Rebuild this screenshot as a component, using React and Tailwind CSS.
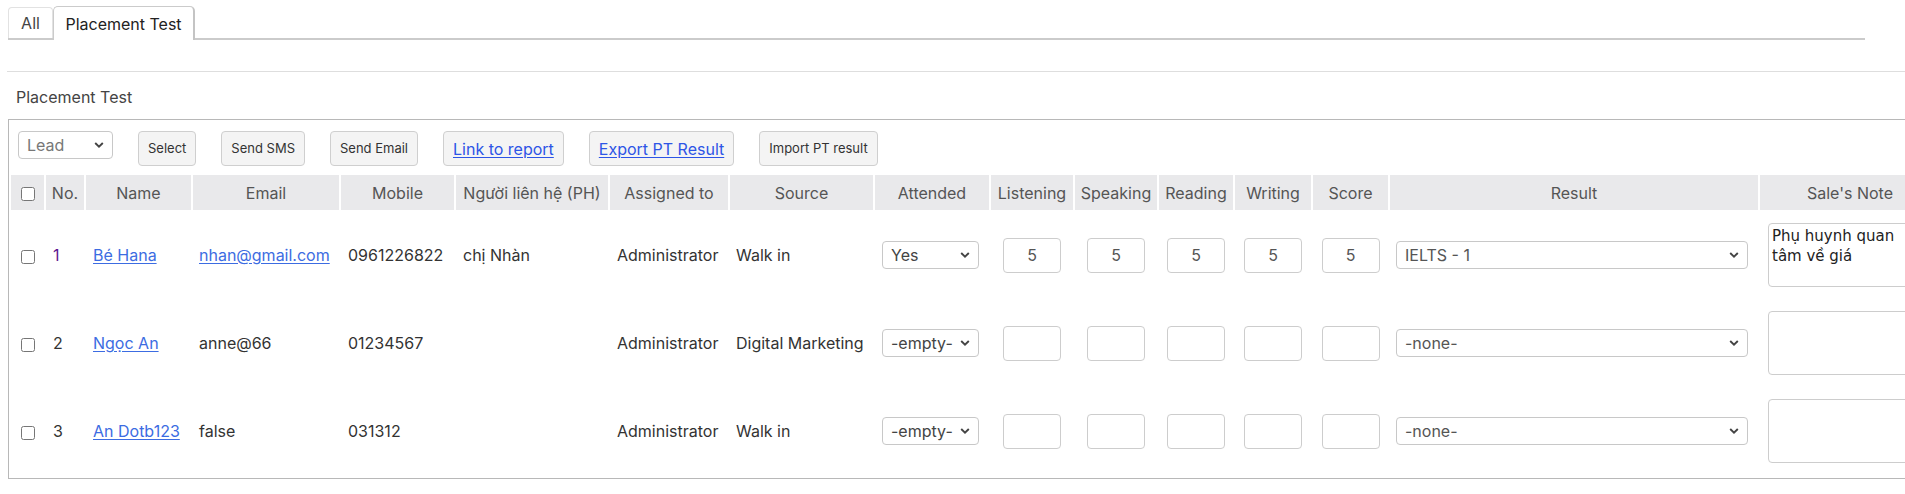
import React from "react";

const columns = [
  { key: "cb", label: "", width: 33 },
  { key: "no", label: "No.", width: 38 },
  { key: "name", label: "Name", width: 105 },
  { key: "email", label: "Email", width: 146 },
  { key: "mobile", label: "Mobile", width: 113 },
  { key: "contact", label: "Người liên hệ (PH)", width: 152 },
  { key: "assigned", label: "Assigned to", width: 118 },
  { key: "source", label: "Source", width: 143 },
  { key: "attended", label: "Attended", width: 114 },
  { key: "listening", label: "Listening", width: 82 },
  { key: "speaking", label: "Speaking", width: 82 },
  { key: "reading", label: "Reading", width: 74 },
  { key: "writing", label: "Writing", width: 76 },
  { key: "score", label: "Score", width: 75 },
  { key: "result", label: "Result", width: 368 },
  { key: "note", label: "Sale's Note", width: 180 },
];

const students = [
  {
    no: 1,
    name: "Bé Hana",
    email: "nhan@gmail.com",
    emailIsLink: true,
    mobile: "0961226822",
    contact: "chị Nhàn",
    assigned: "Administrator",
    source: "Walk in",
    attended: "Yes",
    scores: ["5", "5", "5", "5", "5"],
    result: "IELTS - 1",
    note: "Phụ huynh quan tâm về giá",
  },
  {
    no: 2,
    name: "Ngọc An",
    email: "anne@66",
    emailIsLink: false,
    mobile: "01234567",
    contact: "",
    assigned: "Administrator",
    source: "Digital Marketing",
    attended: "-empty-",
    scores: ["", "", "", "", ""],
    result: "-none-",
    note: "",
  },
  {
    no: 3,
    name: "An Dotb123",
    email: "false",
    emailIsLink: false,
    mobile: "031312",
    contact: "",
    assigned: "Administrator",
    source: "Walk in",
    attended: "-empty-",
    scores: ["", "", "", "", ""],
    result: "-none-",
    note: "",
  },
];

const Chevron = () => (
  <svg
    className="pointer-events-none absolute right-[9px] top-1/2 -translate-y-1/2"
    width="10"
    height="7"
    viewBox="0 0 10 7"
    fill="none"
  >
    <path d="M1.2 1.5 5 5.2 8.8 1.5" stroke="#444" strokeWidth="1.9" />
  </svg>
);

const Dropdown = ({ value, options, className, textClass }) => (
  <div className={`relative inline-block align-middle ${className}`}>
    <select
      defaultValue={value}
      className={`w-full h-[28px] appearance-none bg-white border border-[#c8c8c8] rounded-[4px] pl-[8px] pr-[24px] text-[16px] outline-none ${textClass}`}
    >
      {options.map((o) => (
        <option key={o}>{o}</option>
      ))}
    </select>
    <Chevron />
  </div>
);

const ToolButton = ({ children, link }) => (
  <button
    type="button"
    className={`h-[35px] px-[9px] bg-[#f4f4f4] border border-[#cfcfcf] rounded-[4px] whitespace-nowrap ${
      link
        ? "text-[16px] text-[#2d55e6] underline underline-offset-2"
        : "text-[13px] text-[#333]"
    }`}
  >
    {children}
  </button>
);

export default function App() {
  return (
    <div
      className="w-[1905px] h-[494px] overflow-hidden bg-white text-[#333]"
      style={{ fontFamily: "Inter, 'Liberation Sans', sans-serif" }}
    >
      {/* Tabs */}
      <div className="pt-[6px] pl-[8px] pr-[40px]">
        <div className="flex items-end border-b-2 border-[#cbcbcb] h-[34px]">
          <div className="w-[45px] h-[31px] flex items-center justify-center border border-b-0 border-[#e2e2e2] rounded-t-[4px] text-[16px] text-[#444]">
            All
          </div>
          <div className="w-[142px] h-[34px] -mb-[2px] flex items-center justify-center bg-white border border-b-0 border-[#cbcbcb] border-r-2 border-r-[#c4c4c4] rounded-t-[5px] text-[16px] text-[#222]">
            Placement Test
          </div>
        </div>
      </div>

      <div className="mt-[31px] ml-[7px] border-t border-[#dedede]" />

      <div className="pt-[13px] pl-[16px] text-[16px] leading-6 text-[#444]">
        Placement Test
      </div>

      {/* Panel */}
      <div className="mt-[10px] ml-[8px] w-[1940px] border border-[#b8b8b8] pb-[2px]">
        <div className="flex items-start gap-[25px] pt-[11px] pl-[9px] mb-[9px]">
          <Dropdown
            value="Lead"
            options={["Lead", "Student"]}
            className="w-[95px]"
            textClass="text-[#777]"
          />
          <ToolButton>Select</ToolButton>
          <ToolButton>Send SMS</ToolButton>
          <ToolButton>Send Email</ToolButton>
          <ToolButton link>Link to report</ToolButton>
          <ToolButton link>Export PT Result</ToolButton>
          <ToolButton>Import PT result</ToolButton>
        </div>

        <table className="table-fixed border-separate border-spacing-[2px] w-[1933px] -mt-[2px]">
          <colgroup>
            {columns.map((c) => (
              <col key={c.key} style={{ width: c.width }} />
            ))}
          </colgroup>
          <thead>
            <tr className="h-[35px]">
              {columns.map((c) => (
                <th
                  key={c.key}
                  className="bg-[#e9e9eb] font-normal text-[16px] text-[#555] text-center whitespace-nowrap"
                >
                  {c.key === "cb" ? (
                    <input
                      type="checkbox"
                      className="w-[14px] h-[14px] align-middle"
                    />
                  ) : (
                    c.label
                  )}
                </th>
              ))}
            </tr>
          </thead>
          <tbody>
            {students.map((s) => (
              <tr key={s.no} className="h-[86px] text-[16px]">
                <td className="text-center align-middle">
                  <input
                    type="checkbox"
                    className="w-[14px] h-[14px] align-middle"
                  />
                </td>
                <td
                  className={`pl-[7px] ${
                    s.no === 1 ? "text-[#5b1690]" : "text-[#333]"
                  }`}
                >
                  {s.no}
                </td>
                <td className="pl-[7px] whitespace-nowrap">
                  <a href="#" className="text-[#3c6ce2] underline underline-offset-2">
                    {s.name}
                  </a>
                </td>
                <td className="pl-[6px] whitespace-nowrap">
                  {s.emailIsLink ? (
                    <a href="#" className="text-[#3c6ce2] underline underline-offset-2">
                      {s.email}
                    </a>
                  ) : (
                    s.email
                  )}
                </td>
                <td className="pl-[7px]">{s.mobile}</td>
                <td className="pl-[7px]">{s.contact}</td>
                <td className="pl-[7px]">{s.assigned}</td>
                <td className="pl-[6px] whitespace-nowrap">{s.source}</td>
                <td className="pl-[7px]">
                  <Dropdown
                    value={s.attended}
                    options={["-empty-", "Yes", "No"]}
                    className="w-[97px]"
                    textClass="text-[#444]"
                  />
                </td>
                {s.scores.map((v, i) => (
                  <td key={i} className="text-center">
                    <input
                      type="text"
                      defaultValue={v}
                      className="w-[58px] h-[35px] border border-[#cdcdcd] rounded-[4px] text-center text-[16px] text-[#555] outline-none align-middle"
                    />
                  </td>
                ))}
                <td className="pl-[6px]">
                  <Dropdown
                    value={s.result}
                    options={["-none-", "IELTS - 1", "IELTS - 2"]}
                    className="w-[352px]"
                    textClass="text-[#555]"
                  />
                </td>
                <td className="pl-[8px]">
                  <textarea
                    defaultValue={s.note}
                    className="block w-[150px] h-[64px] border border-[#cdcdcd] rounded-[4px] px-[3px] py-[2px] text-[15px] leading-5 text-[#222] resize-none outline-none"
                    style={{ fontFamily: "'DejaVu Sans', sans-serif" }}
                  />
                </td>
              </tr>
            ))}
          </tbody>
        </table>
      </div>
    </div>
  );
}
